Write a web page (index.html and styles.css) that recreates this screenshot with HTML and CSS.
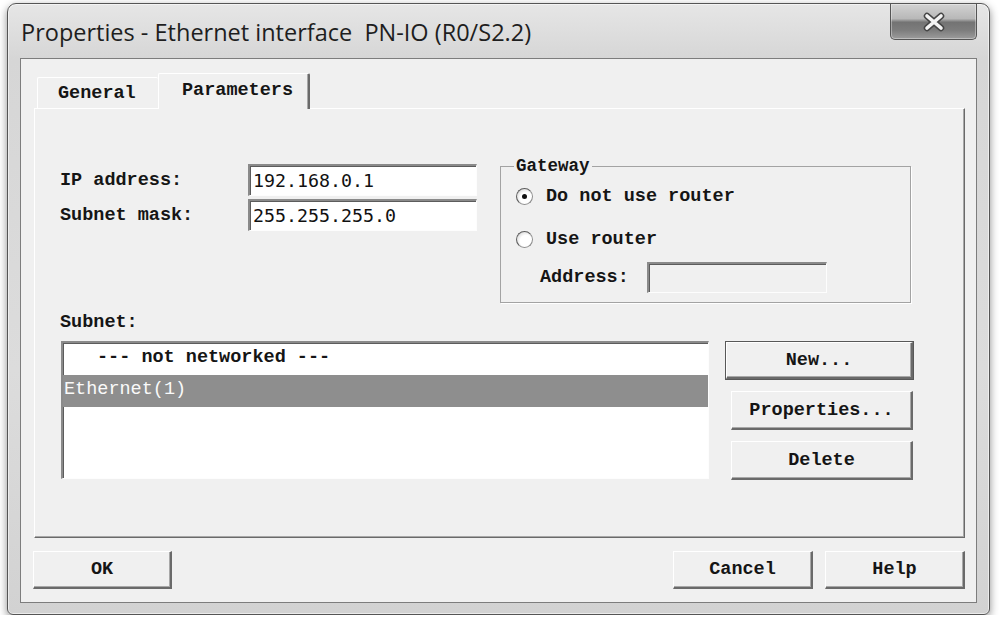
FILE: index.html
```html
<!DOCTYPE html>
<html lang="en">

<head>
    <meta charset="UTF-8">
    <title>Properties - Ethernet interface PN-IO</title>
    <link rel="stylesheet" href="styles.css">
</head>

<body>
    <div class="window">
        <div class="titlebar">
            <span class="title">Properties - Ethernet interface  PN-IO (R0/S2.2)</span>
            <div class="close">
                <svg width="24" height="20" viewBox="0 0 24 20">
                    <path d="M5 4 L19 16 M19 4 L5 16" stroke="#454545" stroke-width="6.5" stroke-linecap="round" fill="none"/>
                    <path d="M5 4 L19 16 M19 4 L5 16" stroke="#f4f4f4" stroke-width="3.6" stroke-linecap="round" fill="none"/>
                </svg>
            </div>
        </div>

        <div class="client">
            <div class="tabs">
                <div class="tab">General</div>
                <div class="tab active">Parameters</div>
            </div>

            <div class="panel">
                <div class="top-row">
                    <div class="addr">
                        <div class="field-row">
                            <label>IP address:</label>
                            <div class="input">192.168.0.1</div>
                        </div>
                        <div class="field-row">
                            <label>Subnet mask:</label>
                            <div class="input">255.255.255.0</div>
                        </div>
                    </div>

                    <fieldset class="gateway">
                        <legend>Gateway</legend>
                        <div class="radio-row first">
                            <span class="radio checked"></span>Do not use router
                        </div>
                        <div class="radio-row">
                            <span class="radio"></span>Use router
                        </div>
                        <div class="address-row">
                            <label>Address:</label>
                            <div class="input disabled"></div>
                        </div>
                    </fieldset>
                </div>

                <div class="subnet-label">Subnet:</div>
                <div class="subnet-row">
                    <div class="listbox">
                        <div class="item indent">--- not networked ---</div>
                        <div class="item selected">Ethernet(1)</div>
                    </div>
                    <div class="side">
                        <button class="btn default">New...</button>
                        <button class="btn">Properties...</button>
                        <button class="btn">Delete</button>
                    </div>
                </div>
            </div>

            <div class="footer">
                <button class="btn ok">OK</button>
                <button class="btn cancel">Cancel</button>
                <button class="btn">Help</button>
            </div>
        </div>
    </div>
</body>

</html>
```

FILE: styles.css
```css
* {
    box-sizing: border-box;
}

body {
    margin: 0;
    background: #fff;
    font-family: "Liberation Mono", "DejaVu Sans Mono", monospace;
    font-size: 18.5px;
    font-weight: bold;
    color: #151515;
}

.window {
    width: 983px;
    height: 612px;
    margin: 3px 0 0 7px;
    border: 1px solid #555;
    border-radius: 9px 9px 6px 6px;
    padding: 0 12px 11px 12px;
    display: flex;
    flex-direction: column;
    background: linear-gradient(to bottom, #e6e6e6, #d6d6d6 9%, #dcdcdc 60%, #d2d2d2);
    box-shadow: inset 0 0 0 1px rgba(255, 255, 255, .55), 0 3px 9px rgba(0, 0, 0, .45);
}

.titlebar {
    height: 54px;
    display: flex;
    justify-content: space-between;
    align-items: flex-start;
}

.title {
    font-family: "Open Sans", "Noto Sans", sans-serif;
    font-weight: normal;
    font-size: 23.5px;
    line-height: 28px;
    color: #1e1e1e;
    white-space: pre;
    margin: 14px 0 0 1px;
}

.close {
    width: 87px;
    height: 36px;
    display: flex;
    align-items: center;
    justify-content: center;
    border: 1px solid #555;
    border-top: none;
    border-radius: 0 0 5px 5px;
    background: linear-gradient(to bottom, #d2d2d2, #b8b8b8 42%, #737373 52%, #7d7d7d 75%, #9c9c9c);
    box-shadow: inset 0 0 0 1px rgba(255, 255, 255, .35);
}

.client {
    flex: 1;
    border: 1px solid #7d7d7d;
    background: #f0f0f0;
    padding: 14px 11px 0 13px;
    display: flex;
    flex-direction: column;
}

/* tabs */
.tabs {
    height: 35px;
    margin-left: 3px;
    display: flex;
    align-items: flex-end;
    position: relative;
    z-index: 1;
}

.tab {
    height: 31px;
    width: 121px;
    padding: 5px 0 0 20px;
    background: #f0f0f0;
    border-top: 1px solid #fff;
    border-left: 1px solid #fff;
    border-radius: 2px 2px 0 0;
}

.tab.active {
    height: 36px;
    width: 152px;
    margin-bottom: -1px;
    padding: 6px 0 0 23px;
    border-right: 2px solid #6a6a6a;
    box-shadow: inset -1px 0 0 #a8a8a8;
}

.panel {
    height: 430px;
    padding-left: 25px;
    border-top: 1px solid #fff;
    border-left: 1px solid #fff;
    border-right: 1px solid #6a6a6a;
    border-bottom: 1px solid #6a6a6a;
    box-shadow: inset -1px -1px 0 #a8a8a8;
}

.top-row {
    display: flex;
    align-items: flex-start;
    padding-top: 47px;
}

.addr {
    margin-top: 8px;
    display: flex;
    flex-direction: column;
    gap: 3px;
}

.field-row {
    height: 32px;
    display: flex;
    align-items: center;
}

.field-row label {
    width: 188px;
}

.input {
    width: 229px;
    height: 32px;
    background: #fff;
    border-top: 2px solid #8a8a8a;
    border-left: 2px solid #8a8a8a;
    border-right: 1px solid #fdfdfd;
    border-bottom: 1px solid #fdfdfd;
    box-shadow: inset 1px 1px 0 #5c5c5c;
    padding: 2px 0 0 3px;
    font-family: "DejaVu Sans Mono", monospace;
    font-weight: normal;
    font-size: 18.3px;
    line-height: 26px;
    color: #111;
}

.input.disabled {
    width: 180px;
    height: 31px;
    background: #f0f0f0;
}

/* gateway group */
.gateway {
    width: 411px;
    margin: 0 0 0 23px;
    padding: 0 0 9px 15px;
    border: 1px solid #a3a3a3;
    box-shadow: 1px 1px 0 #fff;
}

.gateway legend {
    padding: 0 2px;
    margin-left: -2px;
    line-height: 20px;
    font-size: 17.5px;
}

.radio-row {
    height: 28px;
    display: flex;
    align-items: center;
    margin-top: 15px;
}

.radio-row.first {
    margin-top: 6px;
}

.radio {
    width: 17px;
    height: 17px;
    margin-right: 13px;
    border-radius: 50%;
    border: 1px solid #8d8d8d;
    border-top-color: #5e5e5e;
    border-left-color: #5e5e5e;
    background: radial-gradient(circle at 60% 60%, #fff 45%, #e4e4e4 70%, #c4c4c4);
    display: flex;
    align-items: center;
    justify-content: center;
}

.radio.checked::after {
    content: "";
    width: 5px;
    height: 5px;
    border-radius: 50%;
    background: #111;
}

.address-row {
    height: 31px;
    margin-top: 9px;
    padding-left: 24px;
    display: flex;
    align-items: center;
}

.address-row label {
    width: 107px;
}

/* subnet list */
.subnet-label {
    margin-top: 10px;
    line-height: 20px;
}

.subnet-row {
    margin-top: 8px;
    display: flex;
    align-items: flex-start;
}

.listbox {
    width: 648px;
    height: 138px;
    margin-left: 1px;
    background: #fff;
    border-top: 2px solid #8a8a8a;
    border-left: 2px solid #8a8a8a;
    border-right: 1px solid #fdfdfd;
    border-bottom: 1px solid #fdfdfd;
    box-shadow: inset 1px 1px 0 #5c5c5c;
}

.item {
    height: 32px;
    line-height: 30px;
    padding-left: 1px;
}

.item.indent {
    padding-left: 34px;
}

.item.selected {
    background: #8e8e8e;
    color: #fafafa;
    font-weight: normal;
}

.side {
    width: 189px;
    margin-left: 16px;
    display: flex;
    flex-direction: column;
    align-items: flex-end;
    gap: 11px;
}

/* buttons */
.btn {
    width: 182px;
    height: 39px;
    margin: 0 1px 0 0;
    padding: 0;
    font: inherit;
    color: #151515;
    background: #f0f0f0;
    border-top: 1px solid #fff;
    border-left: 1px solid #fff;
    border-right: 2px solid #6a6a6a;
    border-bottom: 2px solid #6a6a6a;
    box-shadow: inset -1px -1px 0 #a8a8a8;
    border-radius: 0;
}

.btn.default {
    width: 187px;
    height: 37px;
    margin: 1px 1px 1px 0;
    box-shadow: inset -1px -1px 0 #a8a8a8, 0 0 0 1px #585858;
}

.footer {
    margin-top: 13px;
    display: flex;
    gap: 12px;
}

.footer .btn {
    width: 140px;
    height: 38px;
    margin: 0;
}

.footer .ok {
    width: 139px;
    margin-left: -1px;
}

.footer .cancel {
    margin-left: auto;
}
```
